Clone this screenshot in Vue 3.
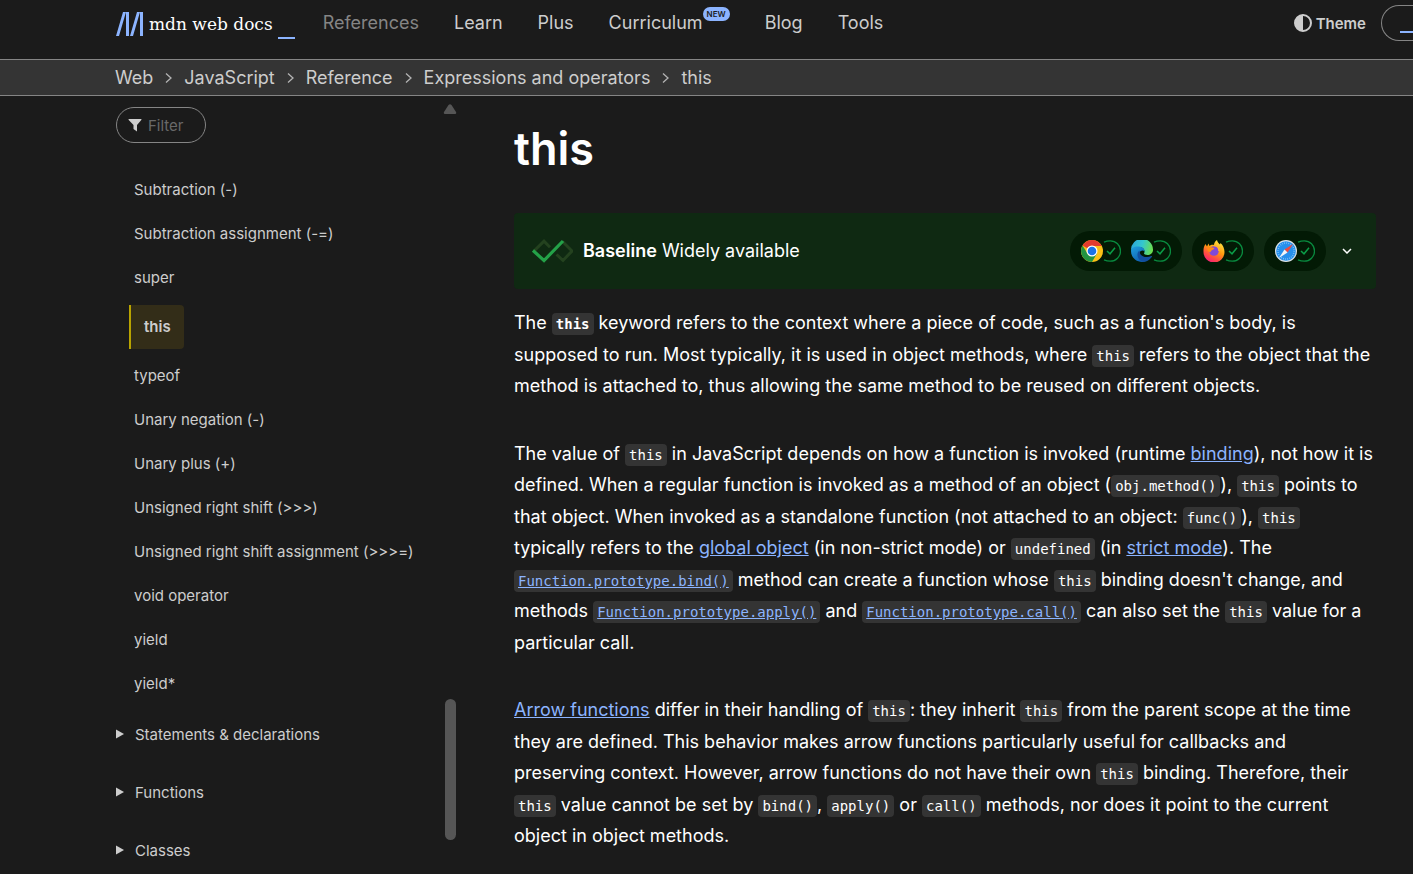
<script setup>
const nav = [
  { label: 'References', muted: true },
  { label: 'Learn' },
  { label: 'Plus' },
  { label: 'Curriculum', badge: 'NEW' },
  { label: 'Blog' },
  { label: 'Tools' },
]
const crumbs = ['Web', 'JavaScript', 'Reference', 'Expressions and operators', 'this']
const pages = [
  'Subtraction (-)',
  'Subtraction assignment (-=)',
  'super',
  'this',
  'typeof',
  'Unary negation (-)',
  'Unary plus (+)',
  'Unsigned right shift (>>>)',
  'Unsigned right shift assignment (>>>=)',
  'void operator',
  'yield',
  'yield*',
]
const sections = ['Statements & declarations', 'Functions', 'Classes']
const engines = [['chrome', 'edge'], ['firefox'], ['safari']]
</script>

<template>
  <div class="page">
    <header class="top">
      <a class="logo" href="#" aria-label="MDN homepage">
        <svg width="28" height="26" viewBox="0 0 28 26" aria-hidden="true">
          <path d="M0 25 7 1h3L3 25zM10 1h3v24h-3zM14 25 21 1h3l-7 24zM24 1h3v24h-3z" fill="#8cb4ff" />
        </svg>
        <span class="wordmark">mdn web docs</span>
        <span class="cursor"></span>
      </a>
      <nav class="menu" aria-label="Main">
        <a v-for="n in nav" :key="n.label" href="#" :class="{ muted: n.muted }">{{ n.label }}<sup v-if="n.badge" class="new">{{ n.badge }}</sup></a>
      </nav>
      <button class="theme" type="button">
        <svg width="18" height="18" viewBox="0 0 18 18" aria-hidden="true">
          <circle cx="9" cy="9" r="8" fill="none" stroke="#cdcdcd" stroke-width="2" />
          <path d="M9 1a8 8 0 0 0 0 16z" fill="#cdcdcd" />
        </svg>
        Theme
      </button>
      <button class="search" type="button" aria-label="Search"><span></span></button>
    </header>

    <nav class="crumbs" aria-label="Breadcrumb">
      <template v-for="(c, i) in crumbs" :key="c">
        <svg v-if="i" width="7" height="12" viewBox="0 0 7 12" aria-hidden="true">
          <path d="M1 1.500 6 6 1 10.500" fill="none" stroke="#b3b3b3" stroke-width="1.300" />
        </svg>
        <a href="#">{{ c }}</a>
      </template>
    </nav>

    <div class="body">
      <aside class="side">
        <div class="tree">
          <label class="filter">
            <svg width="14" height="14" viewBox="0 0 14 14" aria-hidden="true">
              <path d="M1 1h12q1 0 .3 1L9 7v6.500L5.500 11V7L.7 2Q0 1 1 1z" fill="#cdcdcd" />
            </svg>
            <input type="text" placeholder="Filter" aria-label="Filter" />
          </label>
          <ul class="pages">
            <li v-for="p in pages" :key="p" :class="{ current: p === 'this' }"><a href="#">{{ p }}</a></li>
          </ul>
          <div class="sections">
            <button v-for="s in sections" :key="s" class="section" type="button">
              <svg width="8" height="10" viewBox="0 0 8 10" aria-hidden="true"><path d="M0 0.500 8 5 0 9.500z" fill="#cdcdcd" /></svg>
              {{ s }}
            </button>
          </div>
        </div>
        <div class="bar" aria-hidden="true">
          <svg width="14" height="10" viewBox="0 0 14 10"><path d="M5.500 1Q7-.5 8.500 1L13 8q.8 2-1 2H2Q.2 10 1 8z" fill="#565656" /></svg>
          <span class="thumb"></span>
        </div>
      </aside>

      <main class="article">
        <h1>this</h1>
        <section class="baseline">
          <svg class="mark" width="41" height="24" viewBox="0 0 41 24" aria-hidden="true">
            <path d="M2 12 12 2.200l6 6M24.500 15.500 31 21.500 40 12 30.500 2.500" fill="none" stroke="#24421f" stroke-width="3" />
            <path d="M1 11.500 12 21.500 31 2" fill="none" stroke="#24a148" stroke-width="3.200" />
          </svg>
          <p class="status"><strong>Baseline</strong> Widely available</p>
          <div v-for="g in engines" :key="g[0]" class="engine">
            <span v-for="b in g" :key="b" class="browser">
              <svg v-if="b === 'chrome'" width="22" height="22" viewBox="0 0 22 22" role="img" aria-label="Chrome">
                <circle cx="11" cy="11" r="11" fill="#fbc116" />
                <path d="M11 11 1.500 5.500A11 11 0 0 1 20.500 5.500L21 6H11z" fill="#e33b2e" />
                <path d="M1.500 5.500A11 11 0 0 0 11 22l5-8.500L11 11 6.500 13.500z" fill="#229342" />
                <circle cx="11" cy="11" r="5.500" fill="#fff" />
                <circle cx="11" cy="11" r="4.300" fill="#1a73e8" />
              </svg>
              <svg v-else-if="b === 'edge'" width="22" height="22" viewBox="0 0 22 22" role="img" aria-label="Edge">
                <defs>
                  <linearGradient id="edge-top" x1="0" y1=".3" x2="1" y2=".5"><stop offset="0" stop-color="#2aa5dc" /><stop offset=".5" stop-color="#34c7cf" /><stop offset="1" stop-color="#6be04e" /></linearGradient>
                  <linearGradient id="edge-left" x1="0" y1="0" x2=".6" y2="1"><stop offset="0" stop-color="#1fa0e0" /><stop offset="1" stop-color="#0f5fb0" /></linearGradient>
                </defs>
                <path d="M0 10A11 11 0 0 1 22 9.500C22.200 13 19.500 15 16.500 15c-2.500 0-4-.8-3.300-2C14.500 10 12 7 8 7 4.500 7 1.500 8.500 0 10z" fill="url(#edge-top)" />
                <path d="M0 11C0 7.500 4 6 8 6.500c3.500.3 6 2.500 5.500 5C12.500 10 9.500 10 8.500 13c-1 3.500 2 8 7 8C8 24 0 19 0 11z" fill="url(#edge-left)" />
                <path d="M8.300 10.500C4.500 14 7 21 12.500 21.700c4 .2 7-2.700 8.500-5.200.2-.5-.3-.8-.8-.5-4.500 2.500-10.500.5-11.200-3-.1-.8-.3-1.800-.7-2.500z" fill="#124f9f" />
              </svg>
              <svg v-else-if="b === 'firefox'" width="22" height="22" viewBox="0 0 22 22" role="img" aria-label="Firefox">
                <defs>
                  <linearGradient id="fox" x1=".8" y1="0" x2=".25" y2="1"><stop offset="0" stop-color="#fff14a" /><stop offset=".45" stop-color="#ff980e" /><stop offset=".75" stop-color="#ff4a45" /><stop offset="1" stop-color="#f31b7c" /></linearGradient>
                </defs>
                <path d="M2.500 4 4 6.500 5.500 3.500 6.500 6c1-1 3-1.500 4.500-1 .2-2 1-4 3-5 .3 2 1.500 3 3 4.500l.5-1.500c2.500 2 4 5.500 4 9A10.500 10.500 0 0 1 .5 12C.3 8.500 1 6 2.500 4z" fill="url(#fox)" />
                <circle cx="11" cy="11" r="4.800" fill="#8149d8" />
                <path d="M4 7c3 0 5 0 7.500 1-1 2-3.500 1.800-4 4-1 1-2-1-3-1.500z" fill="#ff8a16" />
                <path d="M11 5.500c3 0 5 2.500 5 5.500" fill="none" stroke="#ffb52c" stroke-width="1.500" />
              </svg>
              <svg v-else width="22" height="22" viewBox="0 0 22 22" role="img" aria-label="Safari">
                <circle cx="11" cy="11" r="11" fill="#dce3e8" />
                <circle cx="11" cy="11" r="9.800" fill="#2690ed" />
                <circle cx="11" cy="11" r="8" fill="none" stroke="#8bc8f7" stroke-width="1.500" stroke-dasharray=".7 1.400" />
                <path d="M18 4 9.500 9.500l3 3z" fill="#f0483e" />
                <path d="M4 18 9.500 9.500l3 3z" fill="#f1f5f8" />
              </svg>
              <svg class="ok" width="18" height="22" viewBox="0 0 18 22" role="img" aria-label="Supported">
                <path d="M1 2.200Q4 .8 7.300.8A10.200 10.200 0 0 1 7.300 21.200Q4 21.200 1 19.800" fill="none" stroke="#098a3f" stroke-width="1.300" />
                <path d="M4 11 7 13.800 12 7.800" fill="none" stroke="#0b9d48" stroke-width="1.500" />
              </svg>
            </span>
          </div>
          <button class="expand" type="button" aria-label="Show details">
            <svg width="10" height="6" viewBox="0 0 10 6" aria-hidden="true"><path d="M1 1l4 4 4-4" fill="none" stroke="#fff" stroke-width="1.500" /></svg>
          </button>
        </section>

        <p>The <code><b>this</b></code> keyword refers to the context where a piece of code, such as a function's body, is supposed to run. Most typically, it is used in object methods, where <code>this</code> refers to the object that the method is attached to, thus allowing the same method to be reused on different objects.</p>
        <p>The value of <code>this</code> in JavaScript depends on how a function is invoked (runtime <a href="#">binding</a>), not how it is defined. When a regular function is invoked as a method of an object (<code>obj.method()</code>), <code>this</code> points to that object. When invoked as a standalone function (not attached to an object: <code>func()</code>), <code>this</code> typically refers to the <a href="#">global object</a> (in non-strict mode) or <code>undefined</code> (in <a href="#">strict mode</a>). The <a href="#"><code>Function.prototype.bind()</code></a> method can create a function whose <code>this</code> binding doesn't change, and methods <a href="#"><code>Function.prototype.apply()</code></a> and <a href="#"><code>Function.prototype.call()</code></a> can also set the <code>this</code> value for a particular call.</p>
        <p><a href="#">Arrow functions</a> differ in their handling of <code>this</code>: they inherit <code>this</code> from the parent scope at the time they are defined. This behavior makes arrow functions particularly useful for callbacks and preserving context. However, arrow functions do not have their own <code>this</code> binding. Therefore, their <code>this</code> value cannot be set by <code>bind()</code>, <code>apply()</code> or <code>call()</code> methods, nor does it point to the current object in object methods.</p>
      </main>
    </div>
  </div>
</template>

<style>
body {
  margin: 0;
  background: #1b1b1b;
}
</style>

<style scoped>
.page {
  display: flex;
  flex-direction: column;
  height: 100vh;
  overflow: hidden;
  background: #1b1b1b;
  color: #fff;
  font-family: Inter, "Liberation Sans", sans-serif;
  font-size: 18px;
}
.page * {
  box-sizing: border-box;
}
button,
input {
  margin: 0;
  padding: 0;
  border: 0;
  background: none;
  color: inherit;
  font: inherit;
}
svg {
  display: block;
  flex: none;
}
.top {
  display: flex;
  flex: none;
  align-items: flex-start;
  height: 59px;
  padding-left: 116px;
  color: #cdcdcd;
}
.top a {
  color: inherit;
  text-decoration: none;
}
.logo {
  display: flex;
  flex: none;
  height: 39px;
  padding-top: 11px;
  margin-right: 28px;
}
.wordmark {
  margin-left: 5px;
  color: #fff;
  font-family: "DejaVu Serif", serif;
  font-size: 17px;
  line-height: 26px;
  white-space: nowrap;
}
.cursor {
  align-self: flex-end;
  width: 17px;
  height: 2px;
  margin-left: 5px;
  background: #8cb4ff;
}
.menu {
  display: flex;
  gap: 35px;
  line-height: 46px;
}
.menu a {
  display: flex;
}
.menu a.muted {
  color: #858585;
}
.new {
  height: 14px;
  margin-top: 7px;
  padding: 0 4px;
  border-radius: 7px;
  background: #8cb4ff;
  color: #1b1b1b;
  font-size: 8px;
  font-weight: 600;
  line-height: 14px;
}
.theme {
  display: flex;
  flex: none;
  align-items: center;
  gap: 4px;
  height: 46px;
  margin-left: auto;
  font-size: 15px;
  font-weight: 600;
}
.search {
  flex: none;
  width: 32px;
  height: 36px;
  margin: 5px 0 0 15px;
  border: 1px solid #858585;
  border-right: 0;
  border-radius: 18px 0 0 18px;
}
.search span {
  display: block;
  height: 2px;
  margin: 18px 0 0 18px;
  background: #8cb4ff;
}
.crumbs {
  display: flex;
  flex: none;
  align-items: center;
  gap: 12px;
  height: 37px;
  padding-left: 115px;
  border: solid #858585;
  border-width: 1px 0;
  background: #343434;
  color: #cdcdcd;
}
.crumbs a {
  color: inherit;
  text-decoration: none;
}
.body {
  display: grid;
  flex: 1;
  grid-template-rows: minmax(0, 1fr);
  grid-template-columns: 341px minmax(0, 1fr);
  gap: 57px;
  min-height: 0;
  padding: 0 37px 0 116px;
}
.side {
  display: flex;
  min-height: 0;
  color: #cdcdcd;
  font-size: 15px;
}
.tree {
  flex: 1;
  min-width: 0;
  overflow: hidden;
  padding-top: 11px;
}
.filter {
  display: flex;
  align-items: center;
  gap: 6px;
  width: 90px;
  height: 36px;
  padding: 0 11px;
  border: 1px solid #858585;
  border-radius: 18px;
}
.filter input {
  width: 100%;
  min-width: 0;
}
.filter input::placeholder {
  color: #696969;
  opacity: 1;
}
.pages {
  margin: 25px 0 0;
  padding: 0 0 0 13px;
  list-style: none;
}
.pages li {
  display: flex;
  padding-left: 5px;
  line-height: 44px;
}
.pages a {
  color: inherit;
  text-decoration: none;
}
.pages .current {
  width: fit-content;
  margin: 5px 0;
  padding: 0 13px;
  border-left: 2px solid #b8a300;
  border-radius: 0 4px 4px 0;
  background: #332d18;
  font-weight: 600;
}
.sections {
  display: grid;
  gap: 2px;
}
.section {
  display: flex;
  align-items: center;
  gap: 11px;
  height: 56px;
}
.bar {
  display: flex;
  flex: none;
  flex-direction: column;
  align-items: center;
  width: 14px;
  padding: 8px 0 34px;
}
.thumb {
  width: 11px;
  height: 141px;
  margin-top: auto;
  border-radius: 6px;
  background: #565656;
}
.article {
  min-width: 0;
}
h1 {
  margin: 25px 0 36px;
  font-size: 45px;
  font-weight: 600;
  line-height: 56px;
}
.baseline {
  display: flex;
  align-items: center;
  gap: 10px;
  height: 76px;
  margin-bottom: 18px;
  padding: 0 18px;
  border-radius: 4px;
  background: #0f2912;
}
.baseline .status {
  flex: 1;
  margin: 0;
}
.status strong {
  font-weight: 600;
}
.engine {
  display: flex;
  align-items: center;
  gap: 10px;
  height: 40px;
  padding: 0 11px;
  border-radius: 20px;
  background: #031a05;
}
.browser {
  display: flex;
}
.expand {
  padding: 8px 6px;
}
.article p {
  line-height: 1.75;
}
.article > p {
  margin: 0 0 36px;
}
.article p a {
  color: #8cb4ff;
  text-decoration: underline;
}
code {
  padding: 3px 4px;
  border-radius: 4px;
  background: #343434;
  font-family: "DejaVu Sans Mono", monospace;
  font-size: 14px;
}
</style>
